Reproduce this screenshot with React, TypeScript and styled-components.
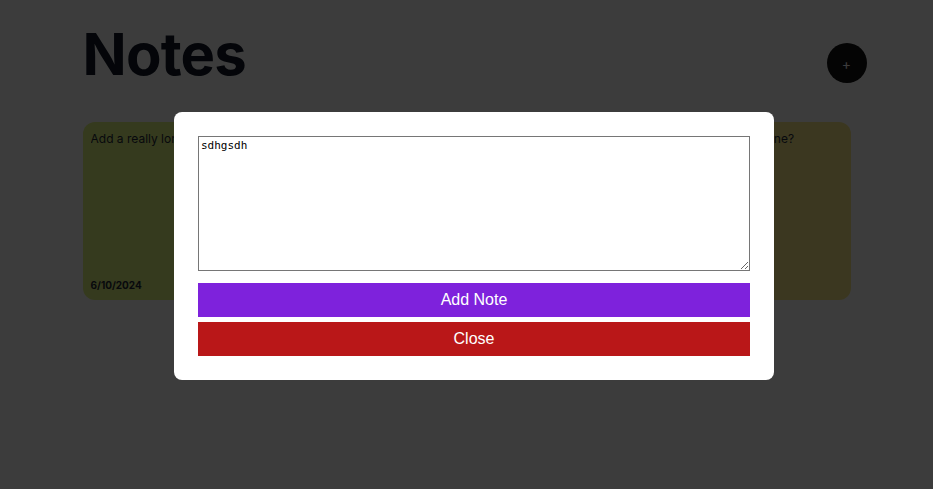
import React from "react";
import styled, { createGlobalStyle } from "styled-components";

const Global = createGlobalStyle`
  html, body { margin: 0; padding: 0; background: #ffffff; }
  body { font-family: Inter, "Liberation Sans", sans-serif; }
`;

const Page = styled.div`
  width: 768px;
  margin: 0 auto;
  padding-top: 22px;
`;

const Header = styled.header`
  display: flex;
  align-items: center;
  justify-content: space-between;
  height: 64px;
  margin-right: -16px;
`;

const Title = styled.h1`
  margin: 0;
  font-family: Inter, "Liberation Sans", sans-serif;
  font-size: 58px;
  font-weight: 700;
  letter-spacing: -0.8px;
  color: #111827;
  line-height: 64px;
`;

const AddButton = styled.button`
  width: 40px;
  height: 40px;
  border-radius: 50%;
  border: none;
  background: #111111;
  color: #ffffff;
  font-family: Inter, sans-serif;
  font-size: 14px;
  display: flex;
  align-items: center;
  justify-content: center;
  margin-top: 18px;
  padding: 0;
`;

const Grid = styled.div`
  display: grid;
  grid-template-columns: repeat(3, 1fr);
  gap: 16px;
  margin-top: 36px;
`;

const Card = styled.div<{ $bg: string }>`
  background: ${(p) => p.$bg};
  border-radius: 12px;
  height: 178px;
  padding: 9px 8px 8px;
  box-sizing: border-box;
  display: flex;
  flex-direction: column;
  justify-content: space-between;
`;

const CardText = styled.p`
  margin: 0;
  font-size: 12px;
  line-height: 16px;
  color: #1f2937;
  white-space: nowrap;
  overflow: hidden;
`;

const CardDate = styled.span`
  font-size: 10px;
  font-weight: 700;
  color: #1f2937;
  margin-bottom: 1px;
`;

const Overlay = styled.div`
  position: fixed;
  inset: 0;
  background: rgba(0, 0, 0, 0.765);
  display: flex;
  align-items: center;
  justify-content: center;
  padding: 3px 0 0 15px;
`;

const Modal = styled.div`
  width: 600px;
  background: #ffffff;
  border-radius: 8px;
  padding: 24px;
  box-sizing: border-box;
  display: flex;
  flex-direction: column;
`;

const TextArea = styled.textarea`
  width: 552px;
  height: 135px;
  box-sizing: border-box;
  border: 1px solid #767676;
  padding: 2px;
  font-family: "DejaVu Sans Mono", monospace;
  font-size: 11px;
  color: #000;
  resize: vertical;
  margin: 0 0 12px;
`;

const ActionButton = styled.button<{ $bg: string }>`
  width: 100%;
  height: 34px;
  border: none;
  background: ${(p) => p.$bg};
  color: #ffffff;
  font-family: "Liberation Sans", Arial, sans-serif;
  font-size: 16px;
  padding: 0;
  & + & {
    margin-top: 5px;
  }
`;

export default function App() {
  return (
    <>
      <Global />
      <Page>
        <Header>
          <Title>Notes</Title>
          <AddButton>+</AddButton>
        </Header>
        <Grid>
          <Card $bg="#e1f57f">
            <CardText>Add a really long note to see how it wraps</CardText>
            <CardDate>6/10/2024</CardDate>
          </Card>
          <Card $bg="#f5e98a">
            <CardText>Buy groceries</CardText>
            <CardDate>6/10/2024</CardDate>
          </Card>
          <Card $bg="#f9e98a">
            <CardText>What should I do for everyone?</CardText>
            <CardDate>6/10/2024</CardDate>
          </Card>
        </Grid>
      </Page>
      <Overlay>
        <Modal>
          <TextArea defaultValue="sdhgsdh" />
          <ActionButton $bg="#7e22dc">Add Note</ActionButton>
          <ActionButton $bg="#b91718">Close</ActionButton>
        </Modal>
      </Overlay>
    </>
  );
}
